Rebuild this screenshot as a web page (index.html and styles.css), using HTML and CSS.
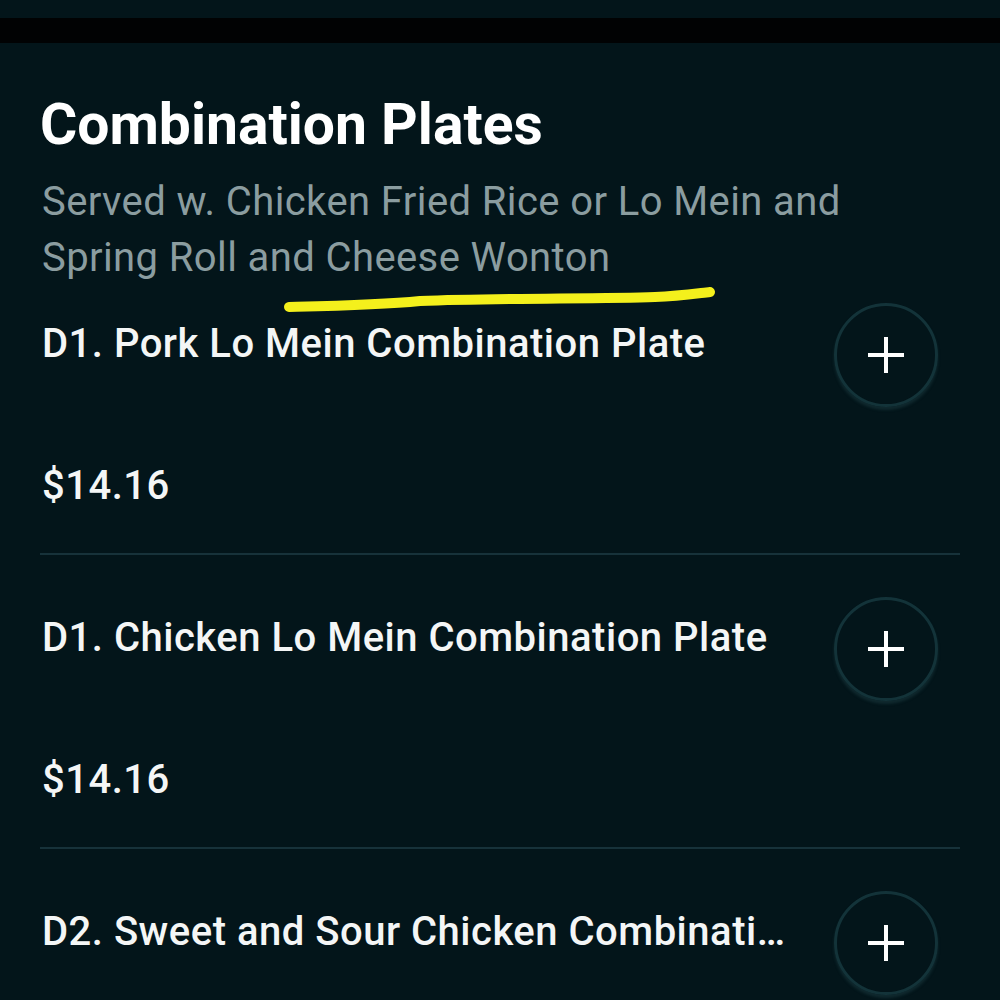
FILE: index.html
```html
<!DOCTYPE html>
<html lang="en">

<head>
    <meta charset="UTF-8">
    <meta name="viewport" content="width=device-width, initial-scale=1.0">
    <title>Combination Plates</title>
    <link rel="stylesheet" href="styles.css">
</head>

<body>
    <div class="top-bar"></div>

    <section class="menu-section">
        <h1>Combination Plates</h1>
        <p class="section-desc">Served w. Chicken Fried Rice or Lo Mein and Spring Roll and Cheese Wonton</p>

        <div class="item">
            <div class="item-main">
                <div class="item-name">D1. Pork Lo Mein Combination Plate</div>
                <div class="item-price">$14.16</div>
            </div>
            <button class="add-btn" aria-label="Add">
                <svg width="38" height="38" viewBox="0 0 38 38">
                    <path d="M19 1 V37 M1 19 H37" stroke="#fff" stroke-width="4" />
                </svg>
            </button>
        </div>

        <div class="item">
            <div class="item-main">
                <div class="item-name">D1. Chicken Lo Mein Combination Plate</div>
                <div class="item-price">$14.16</div>
            </div>
            <button class="add-btn" aria-label="Add">
                <svg width="38" height="38" viewBox="0 0 38 38">
                    <path d="M19 1 V37 M1 19 H37" stroke="#fff" stroke-width="4" />
                </svg>
            </button>
        </div>

        <div class="item">
            <div class="item-main">
                <div class="item-name">D2. Sweet and Sour Chicken Combination Plate</div>
                <div class="item-price">$14.16</div>
            </div>
            <button class="add-btn" aria-label="Add">
                <svg width="38" height="38" viewBox="0 0 38 38">
                    <path d="M19 1 V37 M1 19 H37" stroke="#fff" stroke-width="4" />
                </svg>
            </button>
        </div>
    </section>

    <!-- hand-drawn highlight over the description -->
    <svg class="scribble" width="1000" height="330" viewBox="0 0 1000 330">
        <path d="M289 307 C 330 306, 380 305, 420 301 C 500 298, 600 299, 655 297 C 680 296, 700 293, 710 292"
            fill="none" stroke="#f4f01c" stroke-width="10" stroke-linecap="round" />
    </svg>
</body>

</html>
```

FILE: styles.css
```css
body {
    margin: 0;
    position: relative;
    background-color: #03151a;
    overflow: hidden;
    font-family: "Roboto", "Liberation Sans", sans-serif;
    color: #f4f6f6;
    height: 1000px;
}

.top-bar {
    margin-top: 18px;
    height: 25px;
    background-color: #010203;
}

.menu-section {
    padding: 50px 40px 0 40px;
}

h1 {
    font-size: 57px;
    font-weight: 700;
    line-height: 64px;
    margin: 0;
    color: #ffffff;
}

.section-desc {
    font-size: 40px;
    line-height: 56px;
    margin: 17px 0 0 2px;
    color: #8b9da0;
    letter-spacing: 0.4px;
    max-width: 830px;
}

.scribble {
    position: absolute;
    left: 0;
    top: 0;
    pointer-events: none;
}

.item {
    display: flex;
    justify-content: space-between;
    align-items: flex-start;
    border-bottom: 2px solid #17323a;
    padding: 42px 0 43px 0;
}

.item:first-of-type {
    padding-top: 17px;
}

.item-main {
    min-width: 0;
    flex: 1;
    padding: 17px 44px 0 2px;
}

.item-name {
    font-size: 40px;
    font-weight: 500;
    letter-spacing: 0.5px;
    line-height: 48px;
    white-space: nowrap;
    overflow: hidden;
    text-overflow: ellipsis;
}

.item-price {
    font-size: 40px;
    font-weight: 500;
    letter-spacing: 0.5px;
    line-height: 48px;
    margin-top: 94px;
}

.add-btn {
    flex: none;
    width: 104px;
    height: 104px;
    border-radius: 50%;
    border: 3px solid #133339;
    background: transparent;
    box-shadow: 0 3px 3px rgba(40, 80, 86, 0.35);
    display: flex;
    justify-content: center;
    align-items: center;
    margin-right: 22px;
    padding: 0;
}
```
